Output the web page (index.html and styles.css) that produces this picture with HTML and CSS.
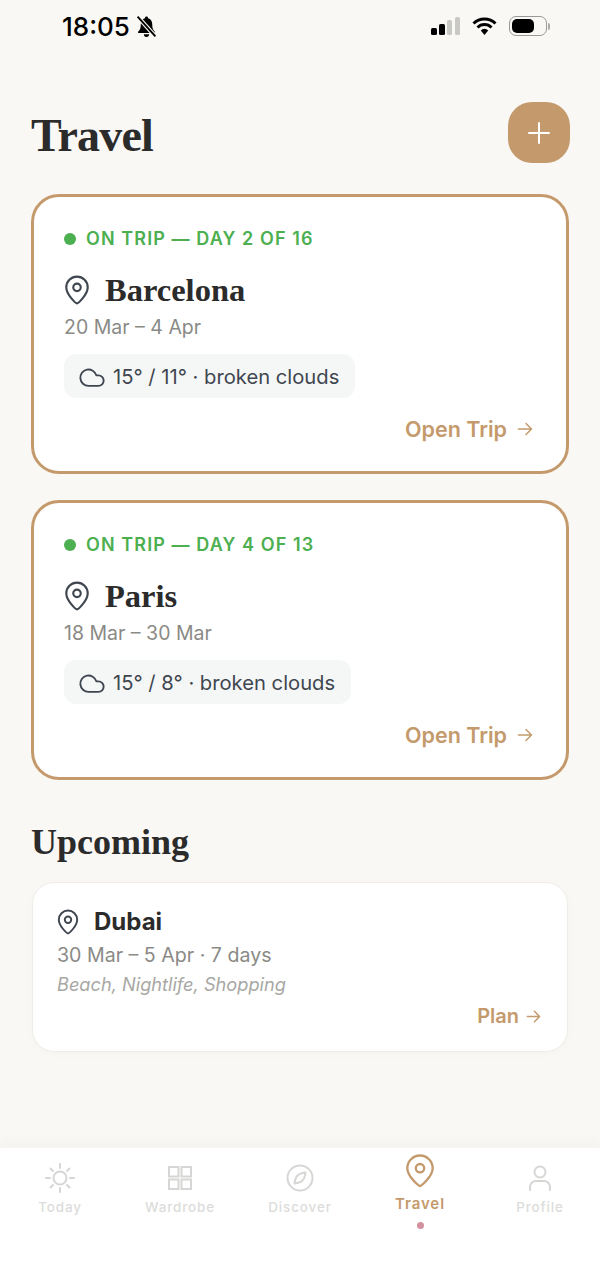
FILE: index.html
```html
<!DOCTYPE html>
<html lang="en">

<head>
    <meta charset="UTF-8" />
    <meta name="viewport" content="width=device-width, initial-scale=1.0" />
    <title>Travel</title>
    <link rel="stylesheet" href="styles.css">
</head>

<body>
    <!-- Status Bar -->
    <div class="status-bar">
        <div class="status-left">
            <span class="clock">18:05</span>
            <svg class="bell" viewBox="0 0 20 22" width="21" height="23">
                <path d="M10 1.500c-.9 0-1.500.6-1.500 1.500C5.800 3.700 4.500 6 4.500 9c0 3.500-.6 5-2.500 7v1.300h16V16c-1.900-2-2.500-3.500-2.500-7 0-3-1.300-5.300-4-6 0-.9-.6-1.500-1.500-1.500z" fill="#000" />
                <path d="M7.500 18.500h5a2.500 2.500 0 0 1-5 0z" fill="#000" />
                <path d="M1.500 1.500l17 19" stroke="#faf8f5" stroke-width="4" />
                <path d="M1.500 1.500l17 19" stroke="#000" stroke-width="1.800" />
            </svg>
        </div>
        <div class="status-right">
            <svg viewBox="0 0 29 18" width="29" height="18">
                <rect x="0" y="11" width="6" height="7" rx="1.500" fill="#000" />
                <rect x="8" y="7" width="6" height="11" rx="1.500" fill="#000" />
                <rect x="16" y="3" width="5" height="15" rx="1.500" fill="#c8c8c6" />
                <rect x="24" y="0" width="5" height="18" rx="1.500" fill="#c8c8c6" />
            </svg>
            <svg viewBox="0 0 25 18" width="25" height="18">
                <path d="M1.500 6.500a15.500 15.500 0 0 1 22 0" fill="none" stroke="#000" stroke-width="3" />
                <path d="M5.500 10.500a9.800 9.800 0 0 1 14 0" fill="none" stroke="#000" stroke-width="3" />
                <path d="M8.800 13.500a5 5 0 0 1 7.400 0L12.500 18z" fill="#000" />
            </svg>
            <div class="battery">
                <div class="battery-body">
                    <div class="battery-fill"></div>
                </div>
                <div class="battery-cap"></div>
            </div>
        </div>
    </div>

    <div class="page">
        <div class="header">
            <h1>Travel</h1>
            <button class="add-btn">
                <svg viewBox="0 0 24 24" width="24" height="24">
                    <path d="M12 2v20M2 12h20" stroke="#fff" stroke-width="2" stroke-linecap="round" />
                </svg>
            </button>
        </div>

        <!-- Active Trips -->
        <div class="trip-card">
            <div class="trip-status"><span class="dot"></span>ON TRIP — DAY 2 OF 16</div>
            <div class="trip-title">
                <svg class="pin" viewBox="0 0 24 28" width="26" height="30">
                    <path d="M12 26.500c-1 0-10-8-10-15a10 10 0 0 1 20 0c0 7-9 15-10 15z" fill="none" stroke="#3f4650" stroke-width="2" stroke-linejoin="round" />
                    <circle cx="12" cy="11.500" r="3.500" fill="none" stroke="#3f4650" stroke-width="2" />
                </svg>
                <h2>Barcelona</h2>
            </div>
            <div class="trip-dates">20 Mar – 4 Apr</div>
            <div class="weather">
                <svg viewBox="1 2 22 18" width="26" height="21">
                    <path d="M17.500 19H9a7 7 0 1 1 6.710-9h1.790a4.500 4.500 0 1 1 0 9z" fill="none" stroke="#3f4650" stroke-width="1.600" stroke-linejoin="round" />
                </svg>
                <span>15° / 11° · broken clouds</span>
            </div>
            <div class="trip-link">Open Trip
                <svg viewBox="0 0 16 16" width="16" height="16">
                    <path d="M1.500 8h13M9 2.500L14.500 8 9 13.500" fill="none" stroke="#c49a6c" stroke-width="1.500" stroke-linecap="round" stroke-linejoin="round" />
                </svg>
            </div>
        </div>

        <div class="trip-card">
            <div class="trip-status"><span class="dot"></span>ON TRIP — DAY 4 OF 13</div>
            <div class="trip-title">
                <svg class="pin" viewBox="0 0 24 28" width="26" height="30">
                    <path d="M12 26.500c-1 0-10-8-10-15a10 10 0 0 1 20 0c0 7-9 15-10 15z" fill="none" stroke="#3f4650" stroke-width="2" stroke-linejoin="round" />
                    <circle cx="12" cy="11.500" r="3.500" fill="none" stroke="#3f4650" stroke-width="2" />
                </svg>
                <h2>Paris</h2>
            </div>
            <div class="trip-dates">18 Mar – 30 Mar</div>
            <div class="weather">
                <svg viewBox="1 2 22 18" width="26" height="21">
                    <path d="M17.500 19H9a7 7 0 1 1 6.710-9h1.790a4.500 4.500 0 1 1 0 9z" fill="none" stroke="#3f4650" stroke-width="1.600" stroke-linejoin="round" />
                </svg>
                <span>15° / 8° · broken clouds</span>
            </div>
            <div class="trip-link">Open Trip
                <svg viewBox="0 0 16 16" width="16" height="16">
                    <path d="M1.500 8h13M9 2.500L14.500 8 9 13.500" fill="none" stroke="#c49a6c" stroke-width="1.500" stroke-linecap="round" stroke-linejoin="round" />
                </svg>
            </div>
        </div>

        <!-- Upcoming -->
        <h3 class="section-title">Upcoming</h3>
        <div class="upcoming-card">
            <div class="upcoming-title">
                <svg viewBox="0 0 24 28" width="22" height="26">
                    <path d="M12 26.500c-1 0-10-8-10-15a10 10 0 0 1 20 0c0 7-9 15-10 15z" fill="none" stroke="#3f4650" stroke-width="2.100" stroke-linejoin="round" />
                    <circle cx="12" cy="11.500" r="3.500" fill="none" stroke="#3f4650" stroke-width="2.100" />
                </svg>
                <h4>Dubai</h4>
            </div>
            <div class="upcoming-dates">30 Mar – 5 Apr · 7 days</div>
            <div class="upcoming-tags">Beach, Nightlife, Shopping</div>
            <div class="plan-link">Plan
                <svg viewBox="0 0 16 16" width="15" height="15">
                    <path d="M1.500 8h13M9 2.500L14.500 8 9 13.500" fill="none" stroke="#c49a6c" stroke-width="1.600" stroke-linecap="round" stroke-linejoin="round" />
                </svg>
            </div>
        </div>
    </div>

    <!-- Bottom Tabs -->
    <div class="tab-bar">
        <div class="tab">
            <svg viewBox="0 0 32 32" width="32" height="32">
                <circle cx="16" cy="16" r="6.500" fill="none" stroke="#d6d6d4" stroke-width="2" />
                <path d="M16 2v4M16 26v4M2 16h4M26 16h4M6.500 6.500l2.500 2.500M23 23l2.500 2.500M6.500 25.500L9 23M23 9l2.500-2.500" stroke="#d6d6d4" stroke-width="2" stroke-linecap="round" />
            </svg>
            <span>Today</span>
        </div>
        <div class="tab">
            <svg viewBox="0 0 32 32" width="32" height="32">
                <rect x="5" y="5" width="9.500" height="9.500" fill="none" stroke="#d6d6d4" stroke-width="2" />
                <rect x="17.500" y="5" width="9.500" height="9.500" fill="none" stroke="#d6d6d4" stroke-width="2" />
                <rect x="5" y="17.500" width="9.500" height="9.500" fill="none" stroke="#d6d6d4" stroke-width="2" />
                <rect x="17.500" y="17.500" width="9.500" height="9.500" fill="none" stroke="#d6d6d4" stroke-width="2" />
            </svg>
            <span>Wardrobe</span>
        </div>
        <div class="tab">
            <svg viewBox="0 0 32 32" width="32" height="32">
                <circle cx="16" cy="16" r="12.500" fill="none" stroke="#d6d6d4" stroke-width="2" />
                <path d="M21.500 10.500c-.5 4-1.500 6.500-3 8s-4 2.500-8 3c.5-4 1.500-6.500 3-8s4-2.500 8-3z" fill="none" stroke="#d6d6d4" stroke-width="2" stroke-linejoin="round" />
            </svg>
            <span>Discover</span>
        </div>
        <div class="tab tab-active">
            <svg viewBox="0 0 32 36" width="30" height="34">
                <path d="M16 34c-1 0-13.500-10-13.500-19a13.500 13.500 0 0 1 27 0c0 9-12.500 19-13.500 19z" fill="none" stroke="#c49a6c" stroke-width="2.500" stroke-linejoin="round" />
                <circle cx="16" cy="15" r="4.500" fill="none" stroke="#c49a6c" stroke-width="2.500" />
            </svg>
            <span>Travel</span>
            <div class="tab-dot"></div>
        </div>
        <div class="tab">
            <svg viewBox="0 0 32 32" width="32" height="32">
                <circle cx="16" cy="10" r="5.500" fill="none" stroke="#d6d6d4" stroke-width="2" />
                <path d="M6 28v-3a6 6 0 0 1 6-6h8a6 6 0 0 1 6 6v3" fill="none" stroke="#d6d6d4" stroke-width="2" stroke-linecap="round" />
            </svg>
            <span>Profile</span>
        </div>
    </div>
</body>

</html>
```

FILE: styles.css
```css
:root {
    --bg-color: #faf8f5;
    --text-color: #2b2b2b;
    --accent: #c49a6c;
    --slate: #3f4650;
    --muted: #8a8a86;
    --green: #4caf50;
}

body {
    font-family: Inter, "Liberation Sans", sans-serif;
    margin: 0;
    height: 1264px;
    overflow: hidden;
    background: var(--bg-color);
    color: var(--text-color);
    display: flex;
    flex-direction: column;
}

.status-bar {
    height: 52px;
    flex-shrink: 0;
    display: flex;
    justify-content: space-between;
    align-items: center;
    padding: 0 50px 0 62px;
}

.status-left {
    display: flex;
    align-items: center;
    gap: 6px;
}

.clock {
    font-size: 26px;
    font-weight: 500;
    color: #000;
}

.status-right {
    display: flex;
    align-items: center;
    gap: 12px;
}

.battery {
    display: flex;
    align-items: center;
    gap: 1px;
}

.battery-body {
    width: 38px;
    height: 20px;
    box-sizing: border-box;
    border: 1px solid #999;
    border-radius: 7px;
    padding: 2px;
    display: flex;
}

.battery-fill {
    width: 22px;
    background: #000;
    border-radius: 5px;
}

.battery-cap {
    width: 2px;
    height: 7px;
    background: #aaa;
    border-radius: 0 2px 2px 0;
}

.page {
    flex: 1;
    padding: 0 31px;
}

.header {
    display: flex;
    justify-content: space-between;
    align-items: center;
    margin-top: 50px;
    margin-bottom: 31px;
}

h1 {
    font-family: "Liberation Serif", serif;
    font-size: 46px;
    font-weight: 700;
    margin: 5px 0 0;
    letter-spacing: -0.8px;
}

.add-btn {
    width: 62px;
    height: 61px;
    margin-right: -1px;
    background: var(--accent);
    border: none;
    border-radius: 24px;
    display: flex;
    align-items: center;
    justify-content: center;
    padding: 0;
}

.trip-card {
    height: 280px;
    box-sizing: border-box;
    background: #fff;
    border: 3px solid var(--accent);
    border-radius: 28px;
    padding: 29px 30px 0;
    margin-bottom: 26px;
}

.trip-status {
    display: flex;
    align-items: center;
    font-size: 18px;
    font-weight: 600;
    line-height: 26px;
    letter-spacing: 1.1px;
    color: var(--green);
}

.dot {
    width: 12px;
    height: 12px;
    border-radius: 50%;
    background: var(--green);
    margin-right: 10px;
}

.trip-title {
    display: flex;
    align-items: center;
    gap: 15px;
    margin-top: 20px;
    height: 36px;
}

.trip-title h2 {
    font-family: "Liberation Serif", serif;
    font-size: 32.5px;
    font-weight: 700;
    margin: 0;
}

.trip-dates {
    font-size: 19.5px;
    line-height: 26px;
    color: var(--muted);
    margin-top: 6px;
}

.weather {
    display: inline-flex;
    align-items: center;
    gap: 8px;
    height: 44px;
    margin-top: 14px;
    padding: 0 16px 0 15px;
    background: #f5f7f7;
    border-radius: 12px;
    font-size: 20.2px;
    color: var(--slate);
}

.trip-link {
    display: flex;
    justify-content: flex-end;
    align-items: center;
    gap: 10px;
    margin-top: 18px;
    padding-right: 3px;
    font-size: 21.5px;
    font-weight: 600;
    color: var(--accent);
}

.section-title {
    font-family: "Liberation Serif", serif;
    font-size: 36px;
    font-weight: 700;
    line-height: 44px;
    margin: 40px 0 18px;
}

.upcoming-card {
    height: 170px;
    box-sizing: border-box;
    margin: 0 1px;
    background: #fff;
    border: 1px solid #efece8;
    border-radius: 22px;
    padding: 24px 24px 0;
    box-shadow: 0 2px 8px rgba(0, 0, 0, 0.02);
}

.upcoming-title {
    display: flex;
    align-items: center;
    gap: 15px;
}

.upcoming-title h4 {
    font-size: 24px;
    font-weight: 700;
    margin: 0;
}

.upcoming-dates {
    font-size: 19.6px;
    line-height: 26px;
    color: var(--muted);
    margin-top: 6px;
}

.upcoming-tags {
    font-size: 18.2px;
    font-style: italic;
    line-height: 24px;
    color: #a8a8a4;
    margin-top: 4px;
}

.plan-link {
    display: flex;
    justify-content: flex-end;
    align-items: center;
    gap: 7px;
    margin-top: 8px;
    padding-right: 2px;
    font-size: 20px;
    font-weight: 600;
    color: var(--accent);
}

.tab-bar {
    height: 116px;
    flex-shrink: 0;
    box-sizing: border-box;
    background: #fff;
    box-shadow: 0 -8px 10px rgba(0, 0, 0, 0.02);
    display: grid;
    grid-template-columns: repeat(5, 1fr);
    padding: 14px 0 0;
}

.tab {
    display: flex;
    flex-direction: column;
    align-items: center;
    gap: 5px;
    font-size: 13.4px;
    font-weight: 500;
    letter-spacing: 0.9px;
    color: #dcdcda;
}

.tab svg {
    flex-shrink: 0;
}

.tab-active {
    margin-top: -8px;
    gap: 6px;
    font-size: 15px;
    font-weight: 600;
    color: var(--accent);
}

.tab-dot {
    width: 7px;
    height: 7px;
    border-radius: 50%;
    background: #d4919f;
    margin-top: 3px;
}
```
